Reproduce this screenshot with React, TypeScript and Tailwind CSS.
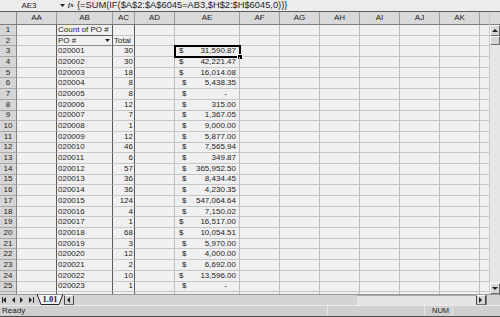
const data: [string, string, string, boolean][] = [
  ["020001", "30", "31,590.87", true],
  ["020002", "30", "42,221.47", true],
  ["020003", "18", "16,014.08", true],
  ["020004", "8", "5,438.35", false],
  ["020005", "8", "-", false],
  ["020006", "12", "315.00", false],
  ["020007", "7", "1,367.05", false],
  ["020008", "1", "9,000.00", false],
  ["020009", "12", "5,877.00", false],
  ["020010", "46", "7,565.94", false],
  ["020011", "6", "349.87", false],
  ["020012", "57", "365,952.50", false],
  ["020013", "36", "8,434.45", false],
  ["020014", "36", "4,230.35", false],
  ["020015", "124", "547,064.64", false],
  ["020016", "4", "7,150.02", false],
  ["020017", "1", "16,517.00", true],
  ["020018", "68", "10,054.51", true],
  ["020019", "3", "5,970.00", false],
  ["020020", "12", "4,000.00", false],
  ["020021", "2", "6,692.00", false],
  ["020022", "10", "13,596.00", true],
  ["020023", "1", "-", false],
  ["020024", "14", "2,920.58", false],
]

const rightCols = ["AF", "AG", "AH", "AI", "AJ", "AK"]

function Tri({ dir, bar }: { dir: "l" | "r" | "u" | "d"; bar?: "l" | "r" }) {
  const pts = {
    l: "4,0 4,6 1,3",
    r: "1,0 1,6 4,3",
    u: "0,4 6,4 3,1",
    d: "0,1 6,1 3,4",
  }[dir]
  return (
    <svg width="7" height="6" viewBox="0 0 7 6" className="block">
      <polygon points={pts} fill="#222" />
      {bar === "l" && <rect x="0" y="0" width="1" height="6" fill="#222" />}
      {bar === "r" && <rect x="5" y="0" width="1" height="6" fill="#222" />}
    </svg>
  )
}

function EmptyCells() {
  return (
    <>
      {rightCols.map((c) => (
        <div key={c} className="w-[40px] shrink-0 border-r border-b border-r-[#bdbdbd] border-b-[#c6c6c6]" />
      ))}
      <div className="w-[9px] shrink-0 border-b border-b-[#c6c6c6]" />
    </>
  )
}

function RowHead({ n }: { n: number }) {
  return (
    <div className="w-[17px] shrink-0 bg-[#d6d6d6] border-r border-b border-r-[#858585] border-b-[#a9a9a9] flex items-center justify-center">
      {n}
    </div>
  )
}

export default function App() {
  return (
    <div className="w-[500px] h-[317px] overflow-hidden flex flex-col bg-[#d4d4d4] text-[#1c1c1c] font-['Liberation_Sans',Arial,sans-serif] text-[8px] leading-none">
      {/* formula bar */}
      <div className="h-[12px] shrink-0 flex items-center bg-[#ececec] border-b border-[#5c5c5c]">
        <div className="w-[58px] text-center">AE3</div>
        <div className="w-[8px] flex justify-center">
          <svg width="5" height="3" viewBox="0 0 5 3"><polygon points="0,0 5,0 2.5,3" fill="#222" /></svg>
        </div>
        <div className="w-[11px] pl-[2px] italic font-bold text-[7px] font-['Liberation_Serif',serif]">fx</div>
        <div className="text-[9.3px] whitespace-nowrap">{"{=SUM(IF($A$2:$A$6045=AB3,$H$2:$H$6045,0))}"}</div>
      </div>

      {/* sheet + vertical scrollbar */}
      <div className="h-[282px] shrink-0 flex">
        <div className="w-[489px] shrink-0 flex flex-col overflow-hidden bg-[#f0f0f0]">
          {/* column headers */}
          <div className="h-[13px] shrink-0 flex bg-[#d9d9d9] border-b border-[#7d7d7d]">
            <div className="w-[17px] shrink-0 border-r border-[#8a8a8a]" />
            {[
              ["AA", "w-[40px]"],
              ["AB", "w-[56px]"],
              ["AC", "w-[22px]"],
              ["AD", "w-[40px]"],
              ["AE", "w-[65px]"],
              ["AF", "w-[40px]"],
              ["AG", "w-[40px]"],
              ["AH", "w-[40px]"],
              ["AI", "w-[40px]"],
              ["AJ", "w-[40px]"],
              ["AK", "w-[40px]"],
            ].map(([c, w]) => (
              <div key={c} className={`${w} shrink-0 border-r border-[#9c9c9c] flex items-center justify-center`}>
                {c}
              </div>
            ))}
            <div className="w-[9px] shrink-0" />
          </div>

          {/* row 1 */}
          <div className="h-[10.7px] shrink-0 flex">
            <RowHead n={1} />
            <div className="w-[40px] shrink-0 border-r border-b border-r-[#5a5a5a] border-b-[#c6c6c6]" />
            <div className="w-[56px] shrink-0 border-r border-b border-r-[#5a5a5a] border-b-[#5a5a5a] flex items-center pl-[1px] whitespace-nowrap">
              Count of PO #
            </div>
            <div className="w-[22px] shrink-0 border-r border-b border-r-[#5a5a5a] border-b-[#c6c6c6]" />
            <div className="w-[40px] shrink-0 border-r border-b border-r-[#bdbdbd] border-b-[#c6c6c6]" />
            <div className="w-[65px] shrink-0 border-r border-b border-r-[#bdbdbd] border-b-[#c6c6c6]" />
            <EmptyCells />
          </div>

          {/* row 2 */}
          <div className="h-[10.7px] shrink-0 flex">
            <RowHead n={2} />
            <div className="w-[40px] shrink-0 border-r border-b border-r-[#5a5a5a] border-b-[#c6c6c6]" />
            <div className="w-[56px] shrink-0 border-r border-b border-r-[#5a5a5a] border-b-[#8a8a8a] flex items-center justify-between pl-[1px] pr-[2px]">
              <span>PO #</span>
              <svg width="5" height="3" viewBox="0 0 5 3"><polygon points="0,0 5,0 2.5,3" fill="#222" /></svg>
            </div>
            <div className="w-[22px] shrink-0 border-r border-b border-r-[#5a5a5a] border-b-[#8a8a8a] flex items-center pl-[1px]">
              Total
            </div>
            <div className="w-[40px] shrink-0 border-r border-b border-r-[#bdbdbd] border-b-[#c6c6c6]" />
            <div className="w-[65px] shrink-0 border-r border-b border-r-[#bdbdbd] border-b-[#c6c6c6]" />
            <EmptyCells />
          </div>

          {/* data rows */}
          {data.map(([po, cnt, amt, wide], i) => {
            const n = i + 3
            return (
              <div key={po} className="h-[10.7px] shrink-0 flex">
                <RowHead n={n} />
                <div className="w-[40px] shrink-0 border-r border-b border-r-[#5a5a5a] border-b-[#c6c6c6]" />
                <div className="w-[56px] shrink-0 border-r border-b border-r-[#5a5a5a] border-b-[#c6c6c6] flex items-center pl-[1px]">
                  {po}
                </div>
                <div className="w-[22px] shrink-0 border-r border-b border-r-[#5a5a5a] border-b-[#c6c6c6] flex items-center justify-end pr-[1px]">
                  {cnt}
                </div>
                <div className="w-[40px] shrink-0 border-r border-b border-r-[#bdbdbd] border-b-[#c6c6c6]" />
                <div
                  className={`relative w-[65px] shrink-0 border-r border-b border-r-[#bdbdbd] border-b-[#c6c6c6] flex items-center justify-between ${
                    wide ? "pl-[4px]" : "pl-[7px]"
                  } ${amt === "-" ? "pr-[12px]" : "pr-[3px]"}`}
                >
                  <span>$</span>
                  <span>{amt}</span>
                  {n === 3 && (
                    <div className="absolute -left-[1px] -top-[1px] w-[67px] h-[12.7px] border-2 border-black">
                      <div className="absolute -right-[3px] -bottom-[3px] w-[4px] h-[4px] bg-black outline outline-1 outline-white" />
                    </div>
                  )}
                </div>
                <EmptyCells />
              </div>
            )
          })}
        </div>

        {/* vertical scrollbar */}
        <div className="w-[11px] shrink-0 flex flex-col bg-[#e6e6e6] border-l border-[#c8c8c8]">
          <div className="h-[13px] shrink-0 bg-[#d9d9d9] border-b border-[#7d7d7d]" />
          <div className="h-[11px] shrink-0 bg-[#d6d6d6] border border-t-white border-l-white border-r-[#6e6e6e] border-b-[#6e6e6e] flex items-center justify-center">
            <Tri dir="u" />
          </div>
          <div className="h-[9px] shrink-0 bg-[#d6d6d6] border border-t-white border-l-white border-r-[#6e6e6e] border-b-[#6e6e6e]" />
          <div className="flex-1" />
          <div className="h-[11px] shrink-0 bg-[#d6d6d6] border border-t-white border-l-white border-r-[#6e6e6e] border-b-[#6e6e6e] flex items-center justify-center">
            <Tri dir="d" />
          </div>
        </div>
      </div>

      {/* sheet tabs + horizontal scrollbar */}
      <div className="h-[11px] shrink-0 flex items-stretch bg-[#d4d4d4] border-t border-[#9a9a9a]">
        <div className="w-[37px] shrink-0 flex items-center justify-around px-[1px]">
          <Tri dir="l" bar="l" />
          <Tri dir="l" />
          <Tri dir="r" />
          <Tri dir="r" bar="r" />
        </div>
        <div className="relative w-[26px] shrink-0 -mt-[1px]">
          <svg width="26" height="11" viewBox="0 0 26 11" className="absolute inset-0">
            <polygon points="0,0 26,0 22,10.5 4,10.5" fill="#f4f4f4" stroke="#222" strokeWidth="1" />
          </svg>
          <div className="relative h-full flex items-center justify-center font-bold font-['Liberation_Serif',serif] text-[8.5px]">1.01</div>
        </div>
        <div className="w-[10px] shrink-0 ml-[1px] bg-[#d6d6d6] border border-t-white border-l-[#444] border-r-[#444] border-b-[#6e6e6e] flex items-center justify-center">
          <Tri dir="l" />
        </div>
        <div className="w-[283px] shrink-0 bg-[#d4d4d4]" />
        <div className="w-[119px] shrink-0 bg-[#e4e4e4] border-t border-[#a6a6a6]" />
        <div className="w-[10px] shrink-0 bg-[#d6d6d6] border border-t-white border-l-[#444] border-r-[#444] border-b-[#6e6e6e] flex items-center justify-center">
          <Tri dir="r" />
        </div>
        <div className="flex-1 border-l border-[#7a7a7a]" />
      </div>

      {/* status bar */}
      <div className="h-[12px] shrink-0 flex items-center bg-[#d0d0d0] border-t border-[#ebebeb] border-b border-b-[#4a4a4a]">
        <div className="w-[328px] pl-[2px] h-full flex items-center border-r border-[#e4e4e4]">Ready</div>
        <div className="w-[97px] h-full border-r border-[#e4e4e4]" />
        <div className="w-[28px] h-full flex items-center pl-[7px] text-[7.5px] border-r border-[#e4e4e4]">NUM</div>
        <div className="flex-1" />
      </div>
    </div>
  )
}
